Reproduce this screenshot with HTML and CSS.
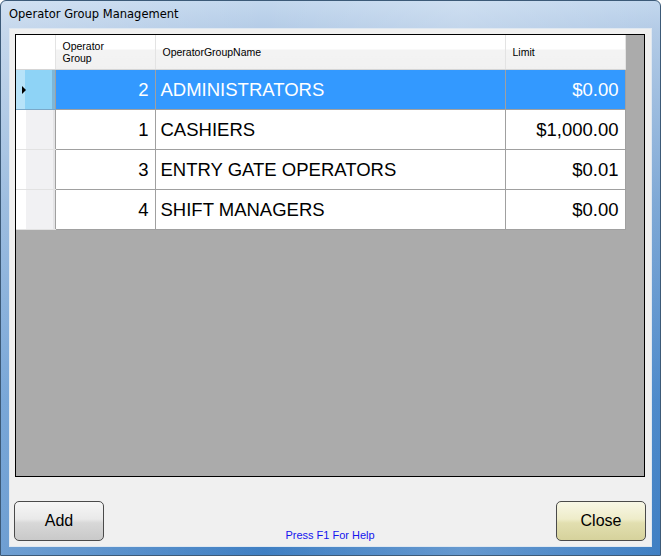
FILE: index.html
```html
<!DOCTYPE html>
<html>
<head>
<meta charset="utf-8">
<title>Operator Group Management</title>
<link rel="stylesheet" href="styles.css">
</head>
<body>
<div class="window">
  <div class="titlebar">Operator Group Management</div>
  <div class="client">
    <div class="grid">
      <table class="dgv">
        <colgroup>
          <col class="c-rh"><col class="c-id"><col class="c-name"><col class="c-limit">
        </colgroup>
        <thead>
          <tr>
            <th class="rh"></th>
            <th>Operator<br>Group</th>
            <th>OperatorGroupName</th>
            <th>Limit</th>
          </tr>
        </thead>
        <tbody>
          <tr class="sel">
            <td class="rh"><span class="arrow"></span></td>
            <td class="num">2</td>
            <td class="txt">ADMINISTRATORS</td>
            <td class="num">$0.00</td>
          </tr>
          <tr>
            <td class="rh"></td>
            <td class="num">1</td>
            <td class="txt">CASHIERS</td>
            <td class="num">$1,000.00</td>
          </tr>
          <tr>
            <td class="rh"></td>
            <td class="num">3</td>
            <td class="txt">ENTRY GATE OPERATORS</td>
            <td class="num">$0.01</td>
          </tr>
          <tr>
            <td class="rh"></td>
            <td class="num">4</td>
            <td class="txt">SHIFT MANAGERS</td>
            <td class="num">$0.00</td>
          </tr>
        </tbody>
      </table>
    </div>
    <div class="footer">
      <button class="btn add">Add</button>
      <div class="help">Press F1 For Help</div>
      <button class="btn close">Close</button>
    </div>
  </div>
</div>
</body>
</html>
```
FILE: styles.css
```css
html, body {
  margin: 0;
  padding: 0;
  background: #ffffff;
}
.window {
  width: 661px;
  height: 556px;
  box-sizing: border-box;
  display: flex;
  flex-direction: column;
  padding: 0 8px 8px 8px;
  border: 1px solid #3c5a78;
  border-radius: 6px 6px 0 0;
  background:
    linear-gradient(90deg, rgba(255,255,255,0.25) 0%, rgba(255,255,255,0) 40%, rgba(255,255,255,0.2) 70%, rgba(255,255,255,0) 100%),
    linear-gradient(180deg, #c2d7ee 0px, #b3cbe6 30px, #7fa9d6 200px, #4d8acb 400px, #3f7fc3 556px);
  font-family: "Liberation Sans", Arial, sans-serif;
}
.titlebar {
  height: 27px;
  line-height: 26px;
  padding-left: 0;
  font-family: "DejaVu Sans", "Liberation Sans", sans-serif;
  font-size: 11.5px;
  color: #000;
}
.client {
  flex: 1;
  background: #f0f0f0;
  border: 1px solid #dfe8f1;
  display: flex;
  flex-direction: column;
  padding: 5px 5px 5px 4px;
}
.grid {
  height: 443px;
  box-sizing: border-box;
  border: 1px solid #000;
  background: #ababab;
  margin-left: 1px;
  margin-right: 1px;
}
.dgv {
  border-collapse: collapse;
  table-layout: fixed;
  width: 609px;
}
.c-rh { width: 39px; }
.c-id { width: 100px; }
.c-name { width: 350px; }
.c-limit { width: 120px; }
.dgv thead th {
  height: 34px;
  padding: 0 0 0 7px;
  text-align: left;
  font-weight: normal;
  font-size: 10.5px;
  line-height: 12px;
  color: #000;
  background: linear-gradient(180deg, #ffffff 0%, #ffffff 40%, #f3f3f3 45%, #f1f1f1 100%);
  border-right: 1px solid #e3e3e3;
  border-bottom: 1px solid #d5d5d5;
  vertical-align: middle;
}
.dgv thead th.rh {
  background: #ffffff;
  border-right: 1px solid #e3e3e3;
}
.dgv tbody td {
  height: 39px;
  padding: 0;
  font-size: 18.5px;
  background: #ffffff;
  color: #000;
  border-right: 1px solid #a0a0a0;
  border-bottom: 1px solid #a0a0a0;
  white-space: nowrap;
}
.dgv tbody td.num {
  text-align: right;
  padding-right: 6px;
}
.dgv tbody td.txt {
  padding-left: 5px;
}
.dgv tbody td.rh {
  background: linear-gradient(90deg, #ffffff 0px, #ffffff 10px, #f1f1f3 10px, #f1f1f3 37px, #e4e4e6 37px);
  border-right: 1px solid #a0a0a0;
  border-bottom: 1px solid #e2e2e2;
  position: relative;
}
.dgv tbody tr.sel td {
  background: #3399ff;
  color: #ffffff;
}
.dgv tbody tr.sel td.rh {
  background: linear-gradient(90deg, #b7e3f9 0px, #b7e3f9 9px, #8ed3f6 9px, #8ed3f6 36px, #7fb6d6 36px);
  border-bottom: 1px solid #7aa8c8;
}
.arrow {
  position: absolute;
  left: 6px;
  top: 16px;
  width: 0;
  height: 0;
  border-top: 4px solid transparent;
  border-bottom: 4px solid transparent;
  border-left: 4px solid #000;
}
.footer {
  flex: 1;
  display: flex;
  align-items: flex-end;
  justify-content: space-between;
}
.btn {
  width: 90px;
  height: 40px;
  border: 1px solid #4a4a4a;
  border-radius: 5px;
  font-family: "Liberation Sans", Arial, sans-serif;
  font-size: 16px;
  color: #000;
  padding: 0;
}
.btn.add {
  background: linear-gradient(180deg, #f6f6f6 0%, #e9e9e9 45%, #d8d8d8 55%, #c9c9c9 100%);
}
.btn.close {
  background: linear-gradient(180deg, #f8f7e6 0%, #eeecc9 45%, #e2dfb0 55%, #d6d29c 100%);
}
.help {
  font-family: "Liberation Sans", Arial, sans-serif;
  font-size: 11px;
  color: #1414ee;
  margin-bottom: 0;
}
```
